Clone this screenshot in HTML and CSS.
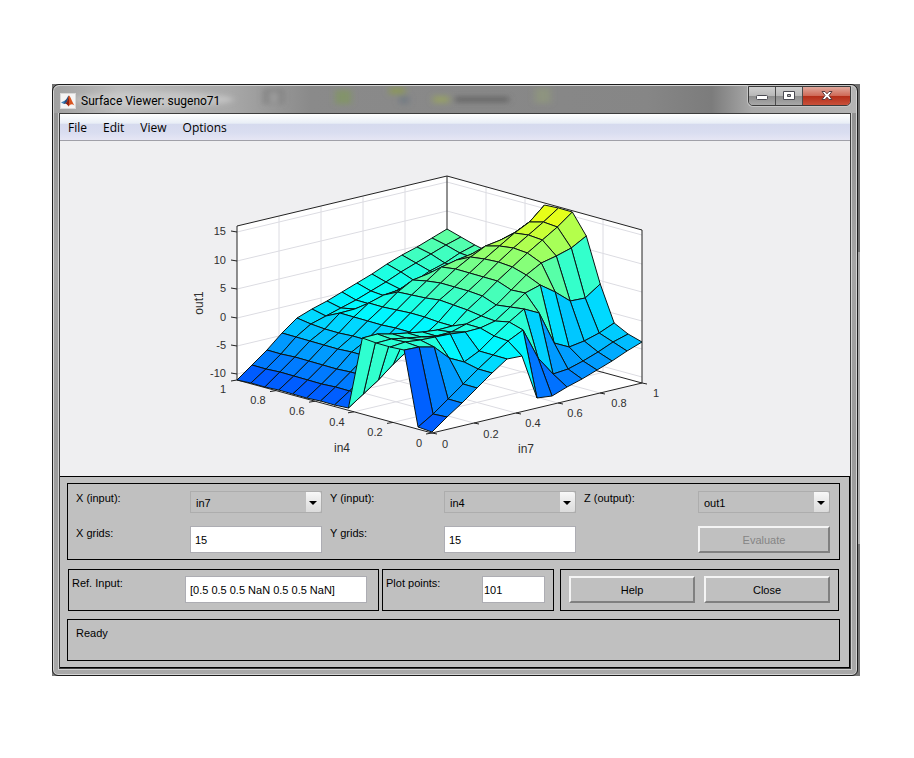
FILE: index.html
```
<!DOCTYPE html>
<html lang="en">
<head>
    <meta charset="UTF-8">
    <meta name="viewport" content="width=device-width, initial-scale=1.0">
    <title>Surface Viewer: sugeno71</title>
    <link rel="stylesheet" href="styles.css">
</head>
<body>
    <div class="desktop">
        <div class="window">
            <header class="titlebar">
                <svg class="glass" viewBox="0 0 804 28" preserveAspectRatio="none" aria-hidden="true">
                    <defs>
                        <filter id="soft" x="-50%" y="-50%" width="200%" height="200%"><feGaussianBlur stdDeviation="3"/></filter>
                    </defs>
                    <g filter="url(#soft)">
                        <ellipse cx="100" cy="14" rx="80" ry="8" fill="#d2d2d2" opacity=".6"/>
                        <rect x="210" y="3" width="20" height="16" fill="#6a6a6a" opacity=".5"/>
                        <rect x="216" y="6" width="9" height="12" fill="#aaa" opacity=".7"/>
                        <rect x="282" y="4" width="16" height="15" fill="#7f9a55" opacity=".6"/>
                        <rect x="336" y="1" width="16" height="8" fill="#8b9a50" opacity=".7"/>
                        <rect x="346" y="10" width="10" height="9" fill="#6a7580" opacity=".6"/>
                        <rect x="380" y="10" width="16" height="8" fill="#9aa55e" opacity=".7"/>
                        <rect x="402" y="11" width="54" height="6" fill="#5c5c5c" opacity=".7"/>
                        <rect x="482" y="2" width="16" height="16" fill="#94a078" opacity=".5"/>
                    </g>
                </svg>
                <svg class="app-icon" viewBox="0 0 16 16" aria-hidden="true">
                    <rect x="0.5" y="0.5" width="15" height="15" fill="#f4f4f4" stroke="#d8d8d8"/>
                    <path d="M1 9.500 5 7.500 7 9 4 11z" fill="#3f7fb5"/>
                    <path d="M5 7.500C7 6 7.500 3 9 2.500L8.500 8 6 10.500 4 11z" fill="#274f80"/>
                    <path d="M9 2.500C10.500 3 11.500 8 14.500 12.500 12 10.500 10.500 11 8.500 13.500 8 12 7 11 5.500 10.500 8 9 8 4.500 9 2.500z" fill="#d9541f"/>
                    <path d="M9 3C8.800 6 9.500 9 8.500 13.500 8 12 7 11 5.500 10.500 8 9 8.500 5 9 3z" fill="#8c1f14"/>
                </svg>
                <h1>Surface Viewer: sugeno71</h1>
                <div class="window-buttons">
                    <button class="win-btn" type="button" aria-label="Minimize">
                        <svg viewBox="0 0 14 12"><rect x="1.500" y="5.500" width="11" height="4" rx="1" fill="#fff" stroke="#4a4a52"/></svg>
                    </button>
                    <button class="win-btn" type="button" aria-label="Maximize">
                        <svg viewBox="0 0 14 12"><path fill-rule="evenodd" d="M1.500 1.500h11v8h-11zM5.500 4.500v2h3v-2z" fill="#fff" stroke="#4a4a52"/></svg>
                    </button>
                    <button class="win-btn win-close" type="button" aria-label="Close window">
                        <svg viewBox="0 0 14 12"><path d="M2 1.500h3l2 2.300 2-2.300h3L9 5.500l3 4H9L7 7.200 5 9.500H2l3-4z" fill="#fff" stroke="#5a3a3c"/></svg>
                    </button>
                </div>
            </header>

            <div class="client">
                <nav class="menubar">
                    <a href="#">File</a>
                    <a href="#">Edit</a>
                    <a href="#">View</a>
                    <a href="#">Options</a>
                </nav>

                <svg id="plot" class="plot" viewBox="60 141 790 335" role="img" aria-label="Surface plot of out1 over in7 and in4"></svg>

                <form class="controls">
                    <section class="group axes-group">
                        <label for="x-input">X (input):</label>
                        <div class="select">
                            <select id="x-input"><option>in7</option></select>
                        </div>
                        <label class="second" for="y-input">Y (input):</label>
                        <div class="select">
                            <select id="y-input"><option>in4</option></select>
                        </div>
                        <label class="third" for="z-output">Z (output):</label>
                        <div class="select">
                            <select id="z-output"><option>out1</option></select>
                        </div>

                        <label for="x-grids">X grids:</label>
                        <input id="x-grids" type="text" value="15">
                        <label class="second" for="y-grids">Y grids:</label>
                        <input id="y-grids" type="text" value="15">
                        <button class="evaluate" type="button" disabled>Evaluate</button>
                    </section>

                    <div class="group-row">
                        <section class="group ref-group">
                            <label for="ref-input">Ref. Input:</label>
                            <input id="ref-input" type="text" value="[0.5 0.5 0.5 NaN 0.5 0.5 NaN]">
                        </section>
                        <section class="group points-group">
                            <label for="plot-points">Plot points:</label>
                            <input id="plot-points" type="text" value="101">
                        </section>
                        <section class="group action-group">
                            <button type="button">Help</button>
                            <button type="button">Close</button>
                        </section>
                    </div>

                    <section class="group status">Ready</section>
                </form>
            </div>
        </div>
    </div>

    <script>
        // projected y of each grid point, one row per in4 value (0 to 1), in7 runs along the row
        const surface = [
            [432, 417, 403, 388, 373, 359, 356, 398, 396, 387, 379, 370, 361, 351, 342],
            [427, 414, 399, 384, 369, 355, 341, 330, 358, 374, 369, 361, 352, 342, 334],
            [350, 347, 347, 358, 362, 351, 336, 322, 309, 313, 343, 347, 341, 333, 323],
            [347, 342, 340, 337, 334, 332, 328, 321, 307, 293, 285, 292, 301, 298, 284],
            [343, 339, 338, 337, 336, 332, 324, 316, 305, 290, 275, 263, 256, 248, 236],
            [338, 334, 334, 333, 332, 330, 326, 310, 296, 281, 267, 253, 240, 227, 212],
            [408, 394, 380, 364, 350, 336, 322, 305, 291, 277, 262, 248, 235, 222, 208],
            [405, 391, 376, 360, 346, 332, 317, 300, 287, 273, 259, 246, 233, 222, 205],
            [401, 387, 372, 356, 343, 328, 313, 298, 283, 269, 257, 246, 240, 232, 221],
            [398, 384, 369, 352, 340, 325, 310, 295, 281, 267, 260, 254, 251, 246, 242],
            [394, 380, 365, 349, 336, 321, 307, 292, 280, 274, 268, 262, 262, 258, 254],
            [390, 376, 361, 345, 333, 317, 303, 295, 290, 283, 279, 275, 268, 258, 252],
            [387, 372, 357, 341, 329, 313, 309, 304, 296, 289, 281, 271, 263, 253, 245],
            [383, 369, 354, 337, 324, 316, 308, 300, 291, 282, 272, 263, 254, 245, 237],
            [380, 365, 350, 333, 318, 309, 301, 292, 283, 274, 264, 255, 247, 238, 229]
        ];

        const svg = document.getElementById('plot');
        const origin = { x: 432, y: 433 };

        function add(tag, attrs, text) {
            const el = document.createElementNS('http://www.w3.org/2000/svg', tag);
            for (const key in attrs) {
                el.setAttribute(key, attrs[key]);
            }
            if (text) {
                el.textContent = text;
            }
            svg.appendChild(el);
        }

        function line(x1, y1, x2, y2, cls) {
            add('line', { x1, y1, x2, y2, class: cls });
        }

        // floor position for in4 = a, in7 = b
        function floor(a, b) {
            return [origin.x - 195 * a + 210 * b, origin.y - 53 * a - 50 * b];
        }

        function jet(t) {
            const channel = c => Math.round(255 * Math.max(0, Math.min(1, 1.5 - Math.abs(4 * t - c))));
            return `rgb(${channel(3)}, ${channel(2)}, ${channel(1)})`;
        }

        function drawBox() {
            add('polygon', { points: '237,226 447,176 642,230 642,383 432,433 237,380', class: 'wall' });
            for (let k = 1; k < 5; k++) {
                const t = k / 5;
                line(237 + 210 * t, 226 - 50 * t, 237 + 210 * t, 380 - 50 * t, 'grid');
                line(642 - 195 * t, 230 - 54 * t, 642 - 195 * t, 383 - 53 * t, 'grid');
                line(...floor(t, 0), ...floor(t, 1), 'grid');
                line(...floor(0, t), ...floor(1, t), 'grid');
            }
            [232, 261, 289, 318, 346, 374].forEach(y => {
                line(237, y, 447, y - 50, 'grid');
                line(447, y - 50, 642, y + 3, 'grid');
            });
            add('polyline', { points: '237,380 237,226 447,176 642,230 642,383', class: 'axis' });
            line(447, 176, 447, 330, 'axis');
            line(447, 330, 642, 383, 'axis');
            add('polyline', { points: '237,380 432,433 642,383', class: 'axis' });
        }

        function drawSurface() {
            const point = (i, j) => `${floor(i / 14, j / 14)[0]},${surface[i][j]}`;
            for (let i = 13; i >= 0; i--) {
                for (let j = 13; j >= 0; j--) {
                    const height = floor(i / 14, j / 14)[1] - surface[i][j];
                    add('polygon', {
                        points: [point(i, j), point(i, j + 1), point(i + 1, j + 1), point(i + 1, j)].join(' '),
                        fill: jet(0.213 + 0.00274 * height),
                        class: 'face'
                    });
                }
            }
        }

        function drawLabels() {
            const zTicks = [['15', 232], ['10', 261], ['5', 289], ['0', 318], ['-5', 346], ['-10', 374]];
            zTicks.forEach(([text, y]) => {
                line(231, y - 1, 237, y, 'axis');
                add('text', { x: 226, y: y + 3, 'text-anchor': 'end' }, text);
            });

            const in4Ticks = [['0', 419, 447], ['0.2', 375, 436], ['0.4', 337, 426], ['0.6', 297, 415], ['0.8', 258, 404], ['1', 223, 393]];
            in4Ticks.forEach(([text, x, y], k) => {
                const [tx, ty] = floor(k / 5, 0);
                line(tx, ty, tx - 6, ty + 1, 'axis');
                add('text', { x, y, 'text-anchor': 'middle' }, text);
            });

            const in7Ticks = [['0', 445, 448], ['0.2', 491, 438], ['0.4', 533, 427], ['0.6', 575, 417], ['0.8', 619, 407], ['1', 656, 397]];
            in7Ticks.forEach(([text, x, y], k) => {
                const [tx, ty] = floor(0, k / 5);
                line(tx, ty, tx + 5, ty + 1, 'axis');
                add('text', { x, y, 'text-anchor': 'middle' }, text);
            });

            add('text', { x: 342, y: 452, 'text-anchor': 'middle', class: 'axis-name' }, 'in4');
            add('text', { x: 526, y: 453, 'text-anchor': 'middle', class: 'axis-name' }, 'in7');
            add('text', { x: 203, y: 303, 'text-anchor': 'middle', class: 'axis-name', transform: 'rotate(-90 203 303)' }, 'out1');
        }

        drawBox();
        drawSurface();
        drawLabels();
    </script>
</body>
</html>
```
FILE: styles.css
```
* {
    box-sizing: border-box;
}

body {
    margin: 0;
    background-color: #fff;
    font-family: "Liberation Sans", Arial, sans-serif;
    font-size: 11px;
    line-height: 14px;
    color: #000;
}

.desktop {
    margin: 84px 54px 82px 52px;
    padding: 0 2px 0 0;
    background: linear-gradient(#6f6f6f 0, #6f6f6f 168px, #a4a4a4 168px, #b4b4b4 460px, #777 460px);
}

.window {
    padding: 0 6px 6px;
    border: 1px solid #1c1c1c;
    border-radius: 7px 7px 6px 6px;
    background: linear-gradient(#8f8f8f, #a5a5a5 30%, #9a9a9a 60%, #a8a8a8);
    box-shadow: inset 0 0 0 1px #d4d4d4;
}

.titlebar {
    position: relative;
    display: flex;
    align-items: center;
    height: 28px;
    margin: 0 -5px;
    padding: 2px 0 0 6px;
    border-radius: 6px 6px 0 0;
    background: linear-gradient(90deg, #a0a0a0, #bcbcbc 8%, #a8a8a8 22%, #8a8a8a 32%, #868686 74%, #7c7c7c 82%, #a8a8a8 87%, #b4b4b4);
    border-top: 1px solid #d4d4d4;
}

.glass {
    position: absolute;
    inset: 0;
    width: 100%;
    height: 100%;
}

.app-icon {
    position: relative;
    width: 16px;
    height: 16px;
}

h1 {
    position: relative;
    margin: 0 0 0 5px;
    font-family: Roboto, "Open Sans", sans-serif;
    font-size: 12px;
    font-weight: 400;
    line-height: 16px;
}

.window-buttons {
    position: relative;
    display: flex;
    align-self: flex-start;
    height: 20px;
    margin: -2px 5px 0 auto;
    border: 1px solid #3c3c3c;
    border-radius: 0 0 5px 5px;
    box-shadow: 0 0 0 1px #c4c4c4;
    overflow: hidden;
}

.win-btn {
    width: 27px;
    padding: 0;
    border: 0;
    border-right: 1px solid #4c4c4c;
    background: linear-gradient(#cfcfcf, #b8b8b8 48%, #8d8d8d 50%, #a8a8a8);
}

.win-btn svg {
    display: block;
    width: 14px;
    height: 12px;
    margin: 0 auto;
}

.win-close {
    width: 47px;
    border-right: 0;
    background: linear-gradient(#e0a89c, #cf6a58 48%, #b32d18 50%, #c9503a);
}

.client {
    border: 1px solid #3c3c3c;
    background-color: #f0f0f0;
    box-shadow: 0 0 0 1px #cfcfcf;
}

.menubar {
    display: flex;
    gap: 16px;
    height: 27px;
    padding: 6px 8px 0;
    border-bottom: 1px solid #a0a0a8;
    background: linear-gradient(#fff, #e8eef6 36%, #d5daee 38%, #d9ddf0 70%, #e6e6f4);
    font-family: "Open Sans", "Noto Sans", sans-serif;
    font-size: 12px;
    line-height: 16px;
}

.menubar a {
    color: #000;
    text-decoration: none;
}

.plot {
    display: block;
    width: 100%;
    background-color: #efeff1;
}

.plot text {
    font-size: 11px;
    fill: #303030;
}

.plot .axis-name {
    font-size: 12px;
}

.wall {
    fill: #fff;
}

.grid {
    stroke: #dcdce2;
}

.axis {
    fill: none;
    stroke: #222;
}

.face {
    stroke: #0a1414;
    stroke-linejoin: round;
}

.controls {
    padding: 6px 9px 6px 7px;
    border: solid #000;
    border-width: 1px 1px 1px 0;
    background-color: #c0c0c0;
}

.group {
    border: 1px solid #000;
}

.axes-group {
    display: grid;
    grid-template-columns: 114fr 132fr 8px 114fr 132fr 8px 114fr 132fr;
    row-gap: 13px;
    padding: 7px 9px 6px 8px;
}

.axes-group label {
    grid-column: 1;
}

.axes-group .second {
    grid-column: 4;
}

.axes-group .third {
    grid-column: 7;
}

.evaluate {
    grid-column: 8;
}

.select {
    position: relative;
    height: 22px;
}

select {
    appearance: none;
    width: 100%;
    height: 22px;
    padding: 2px 20px 0 5px;
    border: 1px solid #adadad;
    border-radius: 0;
    background-color: #c0c0c0;
    font: inherit;
    color: #000;
}

.select::before {
    content: "";
    position: absolute;
    top: 1px;
    right: 1px;
    width: 15px;
    height: 20px;
    border-radius: 0 2px 2px 0;
    background: linear-gradient(#f8f8f8, #e8e8e8 50%, #dcdcdc);
    pointer-events: none;
}

.select::after {
    content: "";
    position: absolute;
    top: 10px;
    right: 5px;
    border: 4px solid transparent;
    border-top-color: #000;
    border-bottom: 0;
    pointer-events: none;
}

input {
    width: 100%;
    height: 27px;
    padding: 0 4px;
    border: 1px solid #adadb3;
    border-radius: 0;
    background-color: #fff;
    font: inherit;
    color: #000;
}

.controls button {
    height: 27px;
    padding: 0;
    border: 2px solid;
    border-color: #f4f4f4 #808080 #808080 #f4f4f4;
    background-color: #c0c0c0;
    font: inherit;
    color: #000;
}

.controls button:disabled {
    color: #858585;
}

.group-row {
    display: grid;
    grid-template-columns: 311fr 3px 172fr 6px 279fr;
    margin: 9px 1px 8px;
}

.ref-group,
.points-group {
    display: flex;
    padding: 6px 11px 7px 3px;
}

.ref-group input,
.points-group input {
    margin-left: auto;
}

.ref-group input {
    width: 182px;
}

.points-group {
    grid-column: 3;
    padding-right: 8px;
}

.points-group input {
    width: 63px;
    padding: 0 1px;
}

.action-group {
    display: flex;
    grid-column: 5;
    gap: 9px;
    padding: 6px 8px 7px;
}

.action-group button {
    flex: 1;
}

.status {
    min-height: 42px;
    padding: 6px 8px;
}
```
